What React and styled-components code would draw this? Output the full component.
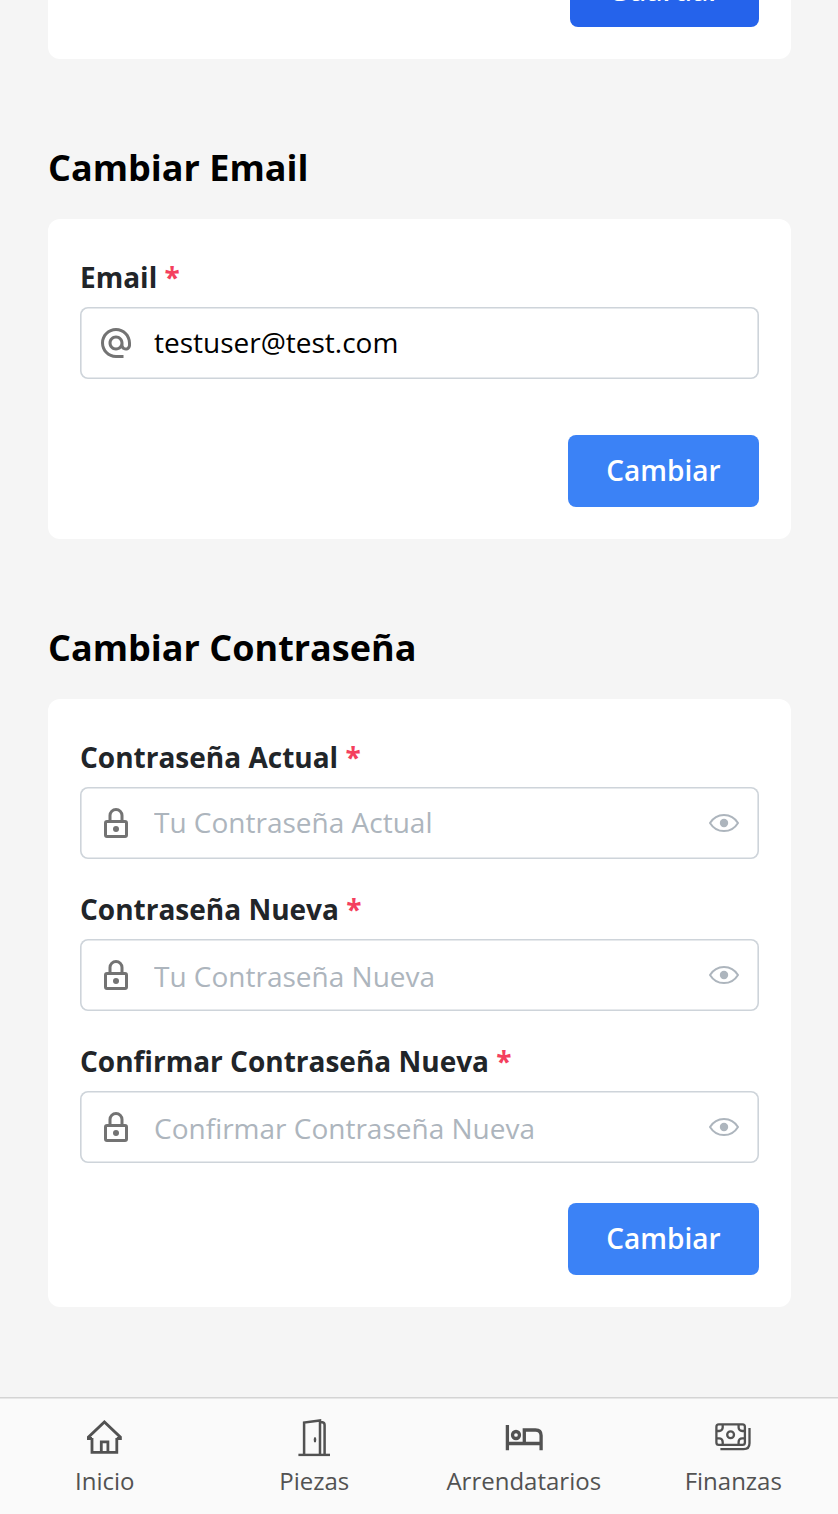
import React from "react";
import styled, { createGlobalStyle } from "styled-components";
import { MdAlternateEmail } from "react-icons/md";

const GlobalStyle = createGlobalStyle`
  *, *::before, *::after { box-sizing: border-box; }
  html, body { margin: 0; background: #f5f5f5; }
  body, input, button { font-family: "Open Sans", sans-serif; }
`;

const Screen = styled.div`
  height: 1514px;
  display: flex;
  flex-direction: column;
  overflow: hidden;
  background: #f5f5f5;
`;

const Content = styled.main`
  flex: 1;
  min-height: 0;
  overflow: hidden;
  display: flex;
  flex-direction: column;
  justify-content: flex-end;
  padding: 0 47.4px 90px 48px;
`;

const Section = styled.section`
  flex: none;
  & + & { margin-top: 80px; }
`;

const Title = styled.h2`
  margin: 0 0 23px;
  height: 57px;
  font-size: 36px;
  line-height: 58px;
  font-weight: 700;
  color: #000;
`;

const Card = styled.form`
  display: flex;
  flex-direction: column;
  padding: 36px 32px 32px;
  background: #fff;
  border-radius: 12px;
`;

const Field = styled.label`
  display: block;
  & + & { margin-top: 28px; }
`;

const Label = styled.span`
  display: block;
  height: 44px;
  margin-bottom: 8px;
  font-size: 28px;
  line-height: 44px;
  font-weight: 700;
  color: #212529;
`;

const Required = styled.span`
  color: #f43f5e;
`;

const InputFrame = styled.span`
  display: flex;
  align-items: center;
  height: 72px;
  padding: 0 18.6px 0 18px;
  box-shadow: inset 0 0 0 1.6px #ced4da;
  border-radius: 8px;
  background: #fff;
  color: #737373;
`;

const Input = styled.input`
  flex: 1;
  min-width: 0;
  height: 40px;
  margin-left: 20px;
  padding: ${(p) => (p.$low ? "2px 0 0" : "0 0 2px")};
  border: 0;
  outline: 0;
  background: transparent;
  font-size: 28px;
  color: #000;
  &::placeholder { color: #adb5bd; opacity: 1; }
`;

const Button = styled.button`
  align-self: flex-end;
  width: ${(p) => (p.$primary ? 188.8 : 190.4)}px;
  height: 72px;
  margin-top: ${(p) => p.$gap || 0}px;
  padding: 0 0 2px;
  border: 0;
  border-radius: 8px;
  font-size: 28px;
  line-height: 38px;
  font-weight: 600;
  color: #fff;
  background: ${(p) => (p.$primary ? "#2563eb" : "#3b82f6")};
`;

const NavBar = styled.nav`
  flex: none;
  display: grid;
  grid-template-columns: repeat(4, 1fr);
  height: 117px;
  box-shadow: inset 0 1.6px 0 #d4d4d4;
  background: #fafafa;
`;

const NavItem = styled.a`
  display: flex;
  flex-direction: column;
  align-items: center;
  padding-top: 20px;
  color: #525252;
  font-size: 24px;
  line-height: 36px;
  svg { margin-bottom: 6px; }
`;

const LockIcon = () => (
  <svg width="36" height="36" viewBox="0 0 24 24" fill="none" stroke="currentColor" strokeWidth="2">
    <rect x="5" y="11" width="14" height="10" rx="1" />
    <path d="M8 11V7a4 4 0 0 1 8 0v4" />
    <circle cx="12" cy="16" r="2" fill="currentColor" stroke="none" />
  </svg>
);

const EyeIcon = () => (
  <svg width="32" height="32" viewBox="0 0 32 32" fill="none">
    <path d="M2 16C8.6 5.2 23.4 5.2 30 16C23.4 26.8 8.6 26.8 2 16Z" stroke="#adb5bd" strokeWidth="2" strokeLinejoin="round" />
    <circle cx="16" cy="16" r="4.2" fill="#adb5bd" />
  </svg>
);

const navIconProps = { width: 40, height: 40, viewBox: "0 0 40 40", fill: "none", stroke: "currentColor" };

const HomeIcon = () => (
  <svg {...navIconProps} strokeWidth="2.8">
    <path d="M7 21V35.3H31.8V21" />
    <path d="M7 21.5H3.4V20.2L19.4 4.9L35.4 20.2V21.5H31.8" />
    <path d="M16.3 35.3V24.8H22.9V35.3" />
  </svg>
);

const DoorIcon = () => (
  <svg {...navIconProps} strokeWidth="2.5">
    <path d="M4.4 37.9H36" strokeWidth="2.4" />
    <path d="M10.1 38V5.6L26 3.4V38" />
    <path d="M26 5.3H28.4Q30.6 5.7 30.6 8V38" />
    <ellipse cx="21" cy="22.8" rx="1.3" ry="2.7" fill="currentColor" stroke="none" />
  </svg>
);

const BedIcon = () => (
  <svg {...navIconProps} strokeWidth="3.3">
    <path d="M3.4 8V33.3M3.4 26.5H37.1M37.1 33.3V18.6Q37.1 13 31.5 13H20.3V26.5" />
    <circle cx="12" cy="18" r="3.5" />
  </svg>
);

const CashIcon = () => (
  <svg {...navIconProps} strokeWidth="2.3">
    <rect x="3.4" y="7.4" width="28.5" height="20.5" rx="2.4" />
    <circle cx="17.6" cy="17.7" r="3.4" />
    <path d="M3.4 14H6.2A3.5 3.5 0 0 0 9.7 10.5V7.4M31.9 14H29.1A3.5 3.5 0 0 1 25.6 10.5V7.4M3.4 21.4H6.2A3.5 3.5 0 0 1 9.7 24.9V27.9M31.9 21.4H29.1A3.5 3.5 0 0 0 25.6 24.9V27.9" />
    <path d="M36.5 11V26.3Q36.5 32.2 30.5 32.2H7.4" />
  </svg>
);

function PasswordField({ label, placeholder, low }) {
  return (
    <Field>
      <Label>{label} <Required>*</Required></Label>
      <InputFrame>
        <LockIcon />
        <Input type="password" placeholder={placeholder} $low={low} />
        <EyeIcon />
      </InputFrame>
    </Field>
  );
}

const navItems = [
  { label: "Inicio", Icon: HomeIcon },
  { label: "Piezas", Icon: DoorIcon },
  { label: "Arrendatarios", Icon: BedIcon },
  { label: "Finanzas", Icon: CashIcon },
];

export default function App() {
  return (
    <>
      <GlobalStyle />
      <Screen>
        <Content>
          <Section>
            <Card>
              <Button type="button" $primary>Guardar</Button>
            </Card>
          </Section>
          <Section>
            <Title>Cambiar Email</Title>
            <Card>
              <Field>
                <Label>Email <Required>*</Required></Label>
                <InputFrame>
                  <MdAlternateEmail size={36} />
                  <Input type="email" defaultValue="testuser@test.com" />
                </InputFrame>
              </Field>
              <Button type="button" $gap={56}>Cambiar</Button>
            </Card>
          </Section>
          <Section>
            <Title>Cambiar Contraseña</Title>
            <Card>
              <PasswordField label="Contraseña Actual" placeholder="Tu Contraseña Actual" />
              <PasswordField label="Contraseña Nueva" placeholder="Tu Contraseña Nueva" low />
              <PasswordField label="Confirmar Contraseña Nueva" placeholder="Confirmar Contraseña Nueva" low />
              <Button type="button" $gap={40}>Cambiar</Button>
            </Card>
          </Section>
        </Content>
        <NavBar>
          {navItems.map(({ label, Icon }) => (
            <NavItem key={label}>
              <Icon />
              {label}
            </NavItem>
          ))}
        </NavBar>
      </Screen>
    </>
  );
}
